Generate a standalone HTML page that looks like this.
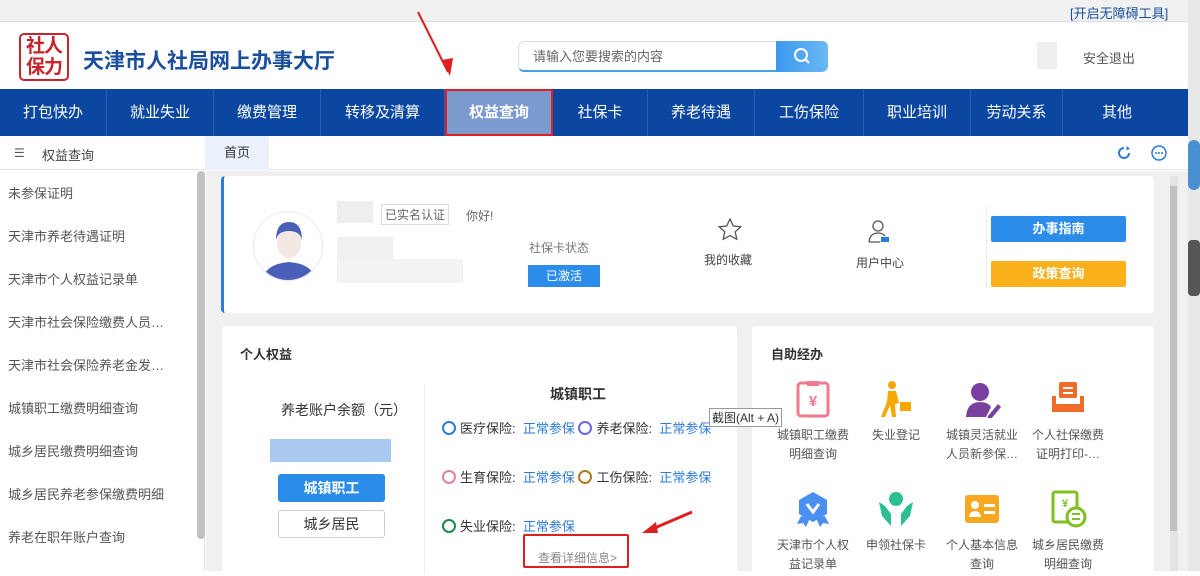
<!DOCTYPE html>
<html><head><meta charset="utf-8"><style>
*{margin:0;padding:0;box-sizing:border-box}
body{width:1200px;height:571px;overflow:hidden;position:relative;background:#fff;font-family:"Liberation Sans","Noto Sans CJK SC",sans-serif;color:#333}
.a{position:absolute}
.nav{left:0;top:89px;width:1188px;height:47px;background:#0b46a0}
.nav div{position:absolute;top:0;height:47px;line-height:47px;text-align:center;color:#fff;font-size:15px;border-right:1px solid #2a5fb0}
.side div.it{position:absolute;left:8px;font-size:13px;color:#555;white-space:nowrap}
.card{background:#fff;border-radius:4px}
.ic{position:absolute;width:90px;text-align:center;font-size:12px;color:#555;line-height:19px}
.ic svg{display:block;margin:0 auto 8px}
.ins{position:absolute;font-size:13px;color:#333}
.ins b{font-weight:normal;color:#2d7bd8}
.ring{display:inline-block;width:14px;height:14px;border-radius:50%;border:2px solid;vertical-align:-2px;margin-right:4px}
</style></head><body>
<div class="a" style="left:0;top:0;width:1188px;height:22px;background:#f1f1f1;border-bottom:1px solid #ddd"></div>
<div class="a" style="left:1070px;top:3px;font-size:13px;color:#1a4f9c">[开启无障碍工具]</div>
<!-- logo -->
<div class="a" style="left:19px;top:33px;width:50px;height:48px;border:2px solid #c8242b;border-radius:5px;color:#c8242b;font-size:19px;font-weight:bold;line-height:21px;text-align:center;padding-top:1px;letter-spacing:-1px">社人<br>保力</div>
<div class="a" style="left:83px;top:45px;font-size:21px;font-weight:bold;color:#1a4f9c">天津市人社局网上办事大厅</div>
<div class="a" style="left:518px;top:41px;width:260px;height:31px;border:1px solid #cfe0f3;border-bottom:2px solid #4a9fe3;border-radius:6px 0 0 6px;font-size:13px;color:#666;line-height:30px;padding-left:14px">请输入您要搜索的内容</div>
<div class="a" style="left:776px;top:41px;width:52px;height:31px;background:linear-gradient(90deg,#3d98ec,#6bb8f5);border-radius:0 6px 6px 0"><svg width="52" height="31"><circle cx="25" cy="14" r="6" stroke="#fff" stroke-width="2" fill="none"/><line x1="29" y1="18" x2="33" y2="22" stroke="#fff" stroke-width="2"/></svg></div>
<div class="a" style="left:1037px;top:42px;width:20px;height:27px;background:#eee"></div>
<div class="a" style="left:1083px;top:48px;font-size:13px;color:#555">安全退出</div>
<div class="a nav">
<div style="left:0;width:107px">打包快办</div><div style="left:107px;width:107px">就业失业</div><div style="left:214px;width:107px">缴费管理</div><div style="left:321px;width:124px">转移及清算</div>
<div style="left:445px;width:108px;background:#7b9bcf;border:2px solid #e02020;font-weight:bold;line-height:43px">权益查询</div>
<div style="left:553px;width:95px">社保卡</div><div style="left:648px;width:107px">养老待遇</div><div style="left:755px;width:109px">工伤保险</div><div style="left:864px;width:107px">职业培训</div><div style="left:971px;width:92px">劳动关系</div><div style="left:1063px;width:108px;border:none">其他</div>
</div>
<!-- tab bar -->
<div class="a" style="left:0;top:136px;width:1188px;height:34px;background:#fff;border-bottom:1px solid #e4e4e4"></div>
<div class="a" style="left:14px;top:146px;font-size:12px;color:#555">☰</div>
<div class="a" style="left:42px;top:145px;font-size:13px;color:#444">权益查询</div>
<div class="a" style="left:205px;top:136px;width:64px;height:34px;background:#eaf1fb;font-size:13px;line-height:34px;text-align:center;color:#333">首页</div>
<svg class="a" style="left:1115px;top:144px" width="60" height="18"><path d="M9 4a5 5 0 1 0 5 5" stroke="#2b7bd8" stroke-width="2" fill="none"/><path d="M12 2l3 3-4 1z" fill="#2b7bd8"/><circle cx="44" cy="9" r="7" stroke="#2b7bd8" stroke-width="1.5" fill="none"/><circle cx="41" cy="9" r="1" fill="#2b7bd8"/><circle cx="44" cy="9" r="1" fill="#2b7bd8"/><circle cx="47" cy="9" r="1" fill="#2b7bd8"/></svg>
<!-- sidebar -->
<div class="a side" style="left:0;top:171px;width:205px;height:400px;background:#fff;border-right:1px solid #e4e4e4">
<div class="it" style="top:12px">未参保证明</div><div class="it" style="top:55px">天津市养老待遇证明</div><div class="it" style="top:98px">天津市个人权益记录单</div><div class="it" style="top:141px">天津市社会保险缴费人员…</div><div class="it" style="top:184px">天津市社会保险养老金发…</div><div class="it" style="top:227px">城镇职工缴费明细查询</div><div class="it" style="top:270px">城乡居民缴费明细查询</div><div class="it" style="top:313px">城乡居民养老参保缴费明细</div><div class="it" style="top:356px">养老在职年账户查询</div>
<div class="a" style="left:197px;top:0;width:8px;height:368px;background:#c1c1c1;border-radius:4px"></div>
</div>
<!-- content -->
<div class="a" style="left:206px;top:171px;width:982px;height:400px;background:#f0f0f0"></div>
<div class="a card" style="left:221px;top:176px;width:933px;height:137px;border-left:3px solid #2b7bd8"></div>
<div class="a" style="left:253px;top:211px;width:70px;height:70px;border-radius:50%;background:#fff;border:1px solid #e4e8f2;overflow:hidden"><svg width="70" height="70"><ellipse cx="35" cy="31" rx="12" ry="15" fill="#f3e7e3"/><path d="M22 28q0-18 13-18t13 18q-2-9-13-9t-13 9z" fill="#4a5fb8"/><path d="M8 70q2-18 27-20 25 2 27 20z" fill="#4a5fb8"/></svg></div>
<div class="a" style="left:337px;top:201px;width:36px;height:22px;background:#eee"></div>
<div class="a" style="left:381px;top:204px;font-size:12px;color:#666;border:1px solid #ddd;padding:1px 3px">已实名认证</div>
<div class="a" style="left:466px;top:207px;font-size:12px;color:#666">你好!</div>
<div class="a" style="left:337px;top:237px;width:56px;height:22px;background:#f0f0f0"></div>
<div class="a" style="left:337px;top:259px;width:126px;height:24px;background:#f3f3f3"></div>
<div class="a" style="left:529px;top:239px;font-size:12px;color:#777">社保卡状态</div>
<div class="a" style="left:528px;top:265px;width:72px;height:22px;background:#2b8cea;color:#fff;font-size:12px;text-align:center;line-height:22px">已激活</div>
<svg class="a" style="left:716px;top:216px" width="28" height="28"><path d="M14 3l3.3 7 7.5.8-5.6 5 1.6 7.5L14 19.6 7.2 23.3l1.6-7.5-5.6-5 7.5-.8z" stroke="#555" stroke-width="1.3" fill="none"/></svg>
<div class="a" style="left:704px;top:251px;font-size:12px;color:#444">我的收藏</div>
<svg class="a" style="left:866px;top:218px" width="28" height="30"><circle cx="12" cy="8" r="5" stroke="#555" stroke-width="1.3" fill="none"/><path d="M3 24q1-9 9-9 5 0 7 3M3 24h11" stroke="#555" stroke-width="1.3" fill="none"/><rect x="15" y="19" width="8" height="5" fill="#2b7bd8"/></svg>
<div class="a" style="left:856px;top:254px;font-size:12px;color:#444">用户中心</div>
<div class="a" style="left:986px;top:205px;width:1px;height:84px;background:#eee"></div>
<div class="a" style="left:991px;top:216px;width:135px;height:26px;background:#2b8cea;color:#fff;font-weight:bold;font-size:13px;text-align:center;line-height:26px;border-radius:2px">办事指南</div>
<div class="a" style="left:991px;top:261px;width:135px;height:26px;background:#fbb11c;color:#fff;font-weight:bold;font-size:13px;text-align:center;line-height:26px;border-radius:2px">政策查询</div>
<!-- card2 -->
<div class="a card" style="left:222px;top:326px;width:515px;height:250px"></div>
<div class="a" style="left:240px;top:344px;font-size:13px;font-weight:bold;color:#333">个人权益</div>
<div class="a" style="left:424px;top:384px;width:1px;height:190px;background:#eee"></div>
<div class="a" style="left:281px;top:400px;font-size:14px;color:#333">养老账户余额（元）</div>
<div class="a" style="left:270px;top:439px;width:121px;height:23px;background:#a9c9f0"></div>
<div class="a" style="left:278px;top:474px;width:107px;height:28px;background:#2b8cea;color:#fff;font-weight:bold;font-size:14px;text-align:center;line-height:28px;border-radius:3px">城镇职工</div>
<div class="a" style="left:278px;top:510px;width:107px;height:28px;border:1px solid #ccc;font-size:14px;text-align:center;line-height:26px;border-radius:3px">城乡居民</div>
<div class="a" style="left:550px;top:384px;font-size:14px;font-weight:bold">城镇职工</div>
<div class="ins" style="left:442px;top:418px"><span class="ring" style="border-color:#2b7bd8"></span>医疗保险: &nbsp;<b>正常参保</b> <span class="ring" style="border-color:#6b6be0"></span>养老保险: &nbsp;<b>正常参保</b></div>
<div class="ins" style="left:442px;top:467px"><span class="ring" style="border-color:#e080a8"></span>生育保险: &nbsp;<b>正常参保</b> <span class="ring" style="border-color:#b07a20"></span>工伤保险: &nbsp;<b>正常参保</b></div>
<div class="ins" style="left:442px;top:516px"><span class="ring" style="border-color:#1a8a4a"></span>失业保险: &nbsp;<b>正常参保</b></div>
<div class="a" style="left:523px;top:534px;width:106px;height:34px;border:2px solid #e02020;border-radius:2px"></div>
<div class="a" style="left:538px;top:549px;font-size:12px;color:#888">查看详细信息&gt;</div>
<!-- card3 -->
<div class="a card" style="left:752px;top:326px;width:402px;height:250px"></div>
<div class="a" style="left:771px;top:344px;font-size:13px;font-weight:bold">自助经办</div>
<div class="ic" style="left:768px;top:380px"><svg width="40" height="38"><rect x="5" y="3" width="30" height="33" rx="3" stroke="#f07a90" stroke-width="3" fill="none"/><rect x="14" y="1" width="12" height="5" fill="#f07a90"/><text x="20" y="26" font-size="15" fill="#f07a90" text-anchor="middle" font-weight="bold">¥</text></svg>城镇职工缴费<br>明细查询</div>
<div class="ic" style="left:851px;top:380px"><svg width="40" height="38"><circle cx="16" cy="5" r="4" fill="#f7a800"/><path d="M12 11h8l3 12-4 1 1 13h-4l-2-12-5 12h-4l6-15z" fill="#f7a800"/><rect x="24" y="22" width="11" height="9" fill="#f7a800"/></svg>失业登记</div>
<div class="ic" style="left:937px;top:380px"><svg width="40" height="38"><circle cx="18" cy="12" r="9" fill="#7a40a0"/><path d="M4 37q1-15 14-15 8 0 11 5l-5 10z" fill="#7a40a0"/><path d="M26 36l10-12 3 3-10 12-4 1z" fill="#7a40a0"/></svg>城镇灵活就业<br>人员新参保…</div>
<div class="ic" style="left:1023px;top:380px"><svg width="40" height="38"><rect x="11" y="2" width="18" height="16" rx="2" fill="#f06a28"/><rect x="15" y="7" width="10" height="2" fill="#fff"/><rect x="15" y="12" width="10" height="2" fill="#fff"/><path d="M4 16h4v8h24v-8h4v16H4z" fill="#f06a28"/></svg>个人社保缴费<br>证明打印-…</div>
<div class="ic" style="left:768px;top:490px"><svg width="40" height="38"><path d="M20 2l14 8v14l-14 8-14-8V10z" fill="#4a90f0"/><path d="M14 14l6 8 6-8" stroke="#fff" stroke-width="3" fill="none"/><path d="M8 26l-4 8 6-1 3 4 4-9zM32 26l4 8-6-1-3 4-4-9z" fill="#4a90f0"/></svg>天津市个人权<br>益记录单</div>
<div class="ic" style="left:851px;top:490px"><svg width="40" height="38"><circle cx="20" cy="9" r="7" fill="#2cc090"/><path d="M3 12l3 14 9 10V24l-6-8zM37 12l-3 14-9 10V24l6-8z" fill="#2cc090"/></svg>申领社保卡</div>
<div class="ic" style="left:937px;top:490px"><svg width="40" height="38"><rect x="3" y="5" width="34" height="28" rx="3" fill="#f8a820"/><circle cx="13" cy="15" r="4" fill="#fff"/><path d="M7 27q1-6 6-6t6 6z" fill="#fff"/><rect x="22" y="14" width="11" height="3" fill="#fff"/><rect x="22" y="21" width="11" height="3" fill="#fff"/></svg>个人基本信息<br>查询</div>
<div class="ic" style="left:1023px;top:490px"><svg width="40" height="38"><rect x="5" y="2" width="24" height="30" rx="2" stroke="#80c020" stroke-width="3" fill="none"/><text x="17" y="17" font-size="11" fill="#80c020" text-anchor="middle" font-weight="bold">¥</text><circle cx="28" cy="27" r="9" fill="#fff" stroke="#80c020" stroke-width="3"/><rect x="24" y="23" width="8" height="2" fill="#80c020"/><rect x="24" y="28" width="8" height="2" fill="#80c020"/></svg>城乡居民缴费<br>明细查询</div>
<div class="a" style="left:709px;top:408px;font-size:12px;background:#fff;border:1px solid #999;padding:0 2px;color:#333">截图(Alt + A)</div>
<svg class="a" style="left:0;top:0" width="1200" height="571"><path d="M418 12L448 72" stroke="#e02020" stroke-width="2"/><path d="M442 60l8 16 3-18z" fill="#e02020"/><path d="M692 512L650 530" stroke="#e02020" stroke-width="3"/><path d="M656 522l-14 11 16 0z" fill="#e02020"/></svg>
<!-- scrollbars -->
<div class="a" style="left:1170px;top:176px;width:8px;height:395px;background:#e4e4e4"></div>
<div class="a" style="left:1170px;top:186px;width:7px;height:345px;background:#c1c1c1"></div>
<div class="a" style="left:1188px;top:0;width:12px;height:571px;background:#e8e8e8"></div>
<div class="a" style="left:1188px;top:140px;width:12px;height:50px;background:#4a8fd0;border-radius:6px"></div>
<div class="a" style="left:1188px;top:240px;width:12px;height:56px;background:#555;border-radius:4px"></div>
</body></html>
